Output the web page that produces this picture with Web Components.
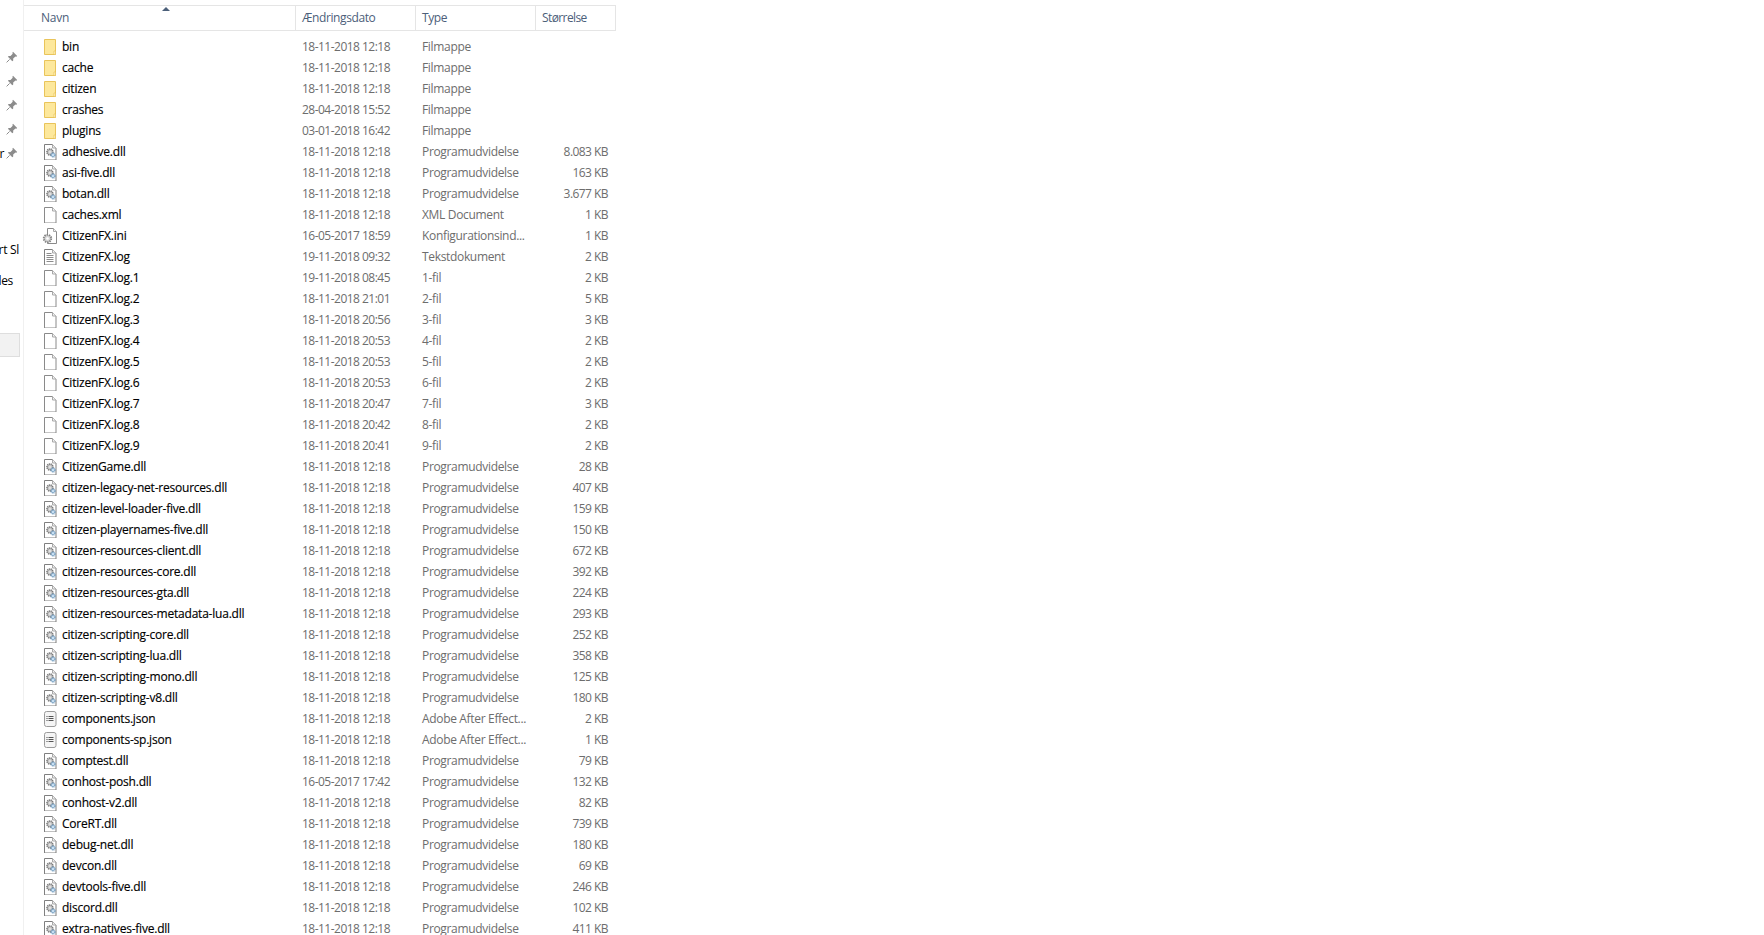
<!DOCTYPE html>
<html lang="da">
<head>
<meta charset="utf-8">
<title>Stifinder</title>
<style>
  html, body { margin: 0; height: 100%; background: #fff; overflow: hidden; }
  body { font: 12px "Open Sans", "Noto Sans", sans-serif; }
</style>
</head>
<body>
<explorer-view></explorer-view>

<script>
const PAGE = `<path d="M2.5.5h8l3.5 3.5v12H2.5z" fill="#fff" stroke="#7f7f7f"/><path d="M10.5.5V4H14" fill="#eee" stroke="#a8a8a8"/>`;
const SYMBOLS = {
  folder: `<path d="M2.5.5h11v15h-11z" fill="#fde89c" stroke="#e9c45a"/><path d="M12 12h1.5v3.5H12z" fill="#fff6d2" stroke="#e9c45a" stroke-width=".7"/>`,
  blank: `<path d="M2.5.5h8l3.5 3.5v12H2.5z" fill="#fff" stroke="#8a8a8a"/><path d="M10.5.5V4H14" fill="#f2f2f2" stroke="#a8a8a8"/>`,
  dll: `${PAGE}
        <circle cx="8" cy="8" r="3" fill="#c8c8c8" stroke="#7a7a7a" stroke-width="1.6" stroke-dasharray="1.2 .6"/><circle cx="8" cy="8" r=".8" fill="#fff"/>
        <circle cx="11" cy="11" r="2" fill="#b9d6ee" stroke="#6f97b8" stroke-width="1.3" stroke-dasharray="1 .5"/><circle cx="11" cy="11" r=".5" fill="#fff"/>`,
  ini: `<path d="M5.5.5h6l3 3v12H5.5z" fill="#fff" stroke="#8a8a8a"/><path d="M11.5.5v3h3" fill="#f2f2f2" stroke="#a8a8a8"/>
        <circle cx="5.5" cy="10.5" r="3.7" fill="#d4d4d4" stroke="#858585" stroke-width="2" stroke-dasharray="1.4 .9"/><circle cx="5.5" cy="10.5" r="1.3" fill="#fff"/>`,
  log: `${PAGE}<path d="M4.5 4.5h5M4.5 6.5h7M4.5 8.5h7M4.5 10.5h7M4.5 12.5h7" stroke="#8c8c8c"/>`,
  json: `<rect x="2.5" y=".5" width="11.5" height="15" rx="2" fill="#f5f5f5" stroke="#9a9a9a"/>
        <path d="M4.5 5.5h1M4.5 7.5h1M4.5 9.5h1" stroke="#444"/><path d="M6.5 5.5h5M6.5 7.5h5M6.5 9.5h5" stroke="#555"/>`
};

class FileIcon extends HTMLElement {
  connectedCallback() {
    this.attachShadow({ mode: "open" });
    this.shadowRoot.innerHTML = `
      <style>
        :host { display: block; width: 16px; height: 16px; flex: none; }
        svg { display: block; }
      </style>
      <svg width="16" height="16" viewBox="0 0 16 16" fill="none">${SYMBOLS[this.getAttribute("kind")]}</svg>
    `;
  }
}

class FileRow extends HTMLElement {
  connectedCallback() {
    this.attachShadow({ mode: "open" });
    this.shadowRoot.innerHTML = `
      <style>
        :host {
          display: grid;
          grid-template-columns: 272px 120px 120px 80px;
          height: 21px;
          align-items: center;
          line-height: 21px;
          white-space: nowrap;
        }
        .name { display: flex; align-items: center; gap: 4px; padding-left: 18px; color: #000; letter-spacing: -.22px; -webkit-text-stroke: .15px #000; }
        .date, .type, .size { color: #6d6d6d; }
        .date, .type { padding-left: 6px; }
        .date { letter-spacing: -.52px; }
        .type { letter-spacing: -.33px; }
        .size { text-align: right; padding-right: 8px; letter-spacing: -.55px; }
      </style>
      <div class="name"><file-icon kind="${this.getAttribute("kind")}"></file-icon><span>${this.getAttribute("name")}</span></div>
      <div class="date">${this.getAttribute("date")}</div>
      <div class="type">${this.getAttribute("type")}</div>
      <div class="size">${this.getAttribute("size") || ""}</div>
    `;
  }
}

class FileHeader extends HTMLElement {
  connectedCallback() {
    this.attachShadow({ mode: "open" });
    this.shadowRoot.innerHTML = `
      <style>
        :host {
          display: grid;
          grid-template-columns: 272px 120px 120px 80px;
          height: 24px;
          position: relative;
          border-top: 1px solid #e5e5e5;
          border-bottom: 1px solid #e5e5e5;
          line-height: 24px;
          color: #4c607a;
          letter-spacing: -.4px;
        }
        div { padding-left: 6px; border-right: 1px solid #e5e5e5; white-space: nowrap; }
        div:first-of-type { padding-left: 17px; letter-spacing: -.2px; }
        div:nth-of-type(4) { letter-spacing: -.6px; }
        .sort {
          position: absolute; left: 138px; top: 1px; width: 0; height: 0; padding: 0;
          border: 4px solid transparent; border-top: 0; border-bottom: 4px solid #4c607a;
        }
      </style>
      <div>Navn</div>
      <div>Ændringsdato</div>
      <div>Type</div>
      <div>Størrelse</div>
      <span class="sort"></span>
    `;
  }
}

const D = "18-11-2018 12:18", P = "Programudvidelse", F = "Filmappe";
const FILES = [
  ["bin", D, F, "", "folder"],
  ["cache", D, F, "", "folder"],
  ["citizen", D, F, "", "folder"],
  ["crashes", "28-04-2018 15:52", F, "", "folder"],
  ["plugins", "03-01-2018 16:42", F, "", "folder"],
  ["adhesive.dll", D, P, "8.083 KB", "dll"],
  ["asi-five.dll", D, P, "163 KB", "dll"],
  ["botan.dll", D, P, "3.677 KB", "dll"],
  ["caches.xml", D, "XML Document", "1 KB", "blank"],
  ["CitizenFX.ini", "16-05-2017 18:59", "Konfigurationsind...", "1 KB", "ini"],
  ["CitizenFX.log", "19-11-2018 09:32", "Tekstdokument", "2 KB", "log"],
  ["CitizenFX.log.1", "19-11-2018 08:45", "1-fil", "2 KB", "blank"],
  ["CitizenFX.log.2", "18-11-2018 21:01", "2-fil", "5 KB", "blank"],
  ["CitizenFX.log.3", "18-11-2018 20:56", "3-fil", "3 KB", "blank"],
  ["CitizenFX.log.4", "18-11-2018 20:53", "4-fil", "2 KB", "blank"],
  ["CitizenFX.log.5", "18-11-2018 20:53", "5-fil", "2 KB", "blank"],
  ["CitizenFX.log.6", "18-11-2018 20:53", "6-fil", "2 KB", "blank"],
  ["CitizenFX.log.7", "18-11-2018 20:47", "7-fil", "3 KB", "blank"],
  ["CitizenFX.log.8", "18-11-2018 20:42", "8-fil", "2 KB", "blank"],
  ["CitizenFX.log.9", "18-11-2018 20:41", "9-fil", "2 KB", "blank"],
  ["CitizenGame.dll", D, P, "28 KB", "dll"],
  ["citizen-legacy-net-resources.dll", D, P, "407 KB", "dll"],
  ["citizen-level-loader-five.dll", D, P, "159 KB", "dll"],
  ["citizen-playernames-five.dll", D, P, "150 KB", "dll"],
  ["citizen-resources-client.dll", D, P, "672 KB", "dll"],
  ["citizen-resources-core.dll", D, P, "392 KB", "dll"],
  ["citizen-resources-gta.dll", D, P, "224 KB", "dll"],
  ["citizen-resources-metadata-lua.dll", D, P, "293 KB", "dll"],
  ["citizen-scripting-core.dll", D, P, "252 KB", "dll"],
  ["citizen-scripting-lua.dll", D, P, "358 KB", "dll"],
  ["citizen-scripting-mono.dll", D, P, "125 KB", "dll"],
  ["citizen-scripting-v8.dll", D, P, "180 KB", "dll"],
  ["components.json", D, "Adobe After Effect...", "2 KB", "json"],
  ["components-sp.json", D, "Adobe After Effect...", "1 KB", "json"],
  ["comptest.dll", D, P, "79 KB", "dll"],
  ["conhost-posh.dll", "16-05-2017 17:42", P, "132 KB", "dll"],
  ["conhost-v2.dll", D, P, "82 KB", "dll"],
  ["CoreRT.dll", D, P, "739 KB", "dll"],
  ["debug-net.dll", D, P, "180 KB", "dll"],
  ["devcon.dll", D, P, "69 KB", "dll"],
  ["devtools-five.dll", D, P, "246 KB", "dll"],
  ["discord.dll", D, P, "102 KB", "dll"],
  ["extra-natives-five.dll", D, P, "411 KB", "dll"],
];

class FileList extends HTMLElement {
  connectedCallback() {
    this.attachShadow({ mode: "open" });
    const rows = FILES.map(([name, date, type, size, kind]) =>
      `<file-row name="${name}" date="${date}" type="${type}" size="${size}" kind="${kind}"></file-row>`
    ).join("");
    this.shadowRoot.innerHTML = `
      <style>
        :host { display: block; width: 592px; padding-top: 5px; }
        .rows { padding-top: 5px; }
      </style>
      <file-header></file-header>
      <div class="rows">${rows}</div>
    `;
  }
}

class NavItem extends HTMLElement {
  connectedCallback() {
    this.attachShadow({ mode: "open" });
    const pin = this.hasAttribute("pinned") ? `
      <svg width="12" height="12" viewBox="0 0 12 12">
        <path d="M7 .8 11.2 5 10.3 5.7 9.4 5.4 7.2 7.6 7.2 9.4 6.3 10.2 1.9 5.8 2.7 4.9 4.5 4.9 6.7 2.7 6.4 1.7z" fill="#8c8c8c"/>
        <path d="M3.6 8.4.6 11.4" stroke="#8c8c8c"/>
      </svg>` : "";
    this.shadowRoot.innerHTML = `
      <style>
        :host {
          display: flex; height: 24px; align-items: center; justify-content: flex-end;
          gap: 2px; padding-right: 5px; white-space: nowrap; overflow: hidden; box-sizing: border-box;
          color: #000; letter-spacing: -.3px;
        }
        :host([selected]) { width: 20px; background: #f2f2f2; border: 1px solid #dedede; border-left: 0; padding: 0; }
        svg { flex: none; }
      </style>
      <slot></slot>${pin}
    `;
  }
}

class NavPane extends HTMLElement {
  connectedCallback() {
    this.attachShadow({ mode: "open" });
    this.shadowRoot.innerHTML = `
      <style>
        :host { display: block; width: 24px; flex: none; padding-top: 45px; box-sizing: border-box; border-right: 1px solid #f0f0f0; overflow: hidden; }
        .gap-a { height: 72px; }
        .gap-b { height: 7px; }
        .gap-c { height: 41px; }
      </style>
      <nav-item pinned></nav-item>
      <nav-item pinned></nav-item>
      <nav-item pinned></nav-item>
      <nav-item pinned></nav-item>
      <nav-item pinned>r</nav-item>
      <div class="gap-a"></div>
      <nav-item style="padding-right: 4px">rt Sl</nav-item>
      <div class="gap-b"></div>
      <nav-item style="padding-right: 10px">les</nav-item>
      <div class="gap-c"></div>
      <nav-item selected></nav-item>
    `;
  }
}

class ExplorerView extends HTMLElement {
  connectedCallback() {
    this.attachShadow({ mode: "open" });
    this.shadowRoot.innerHTML = `
      <style>
        :host { display: flex; height: 935px; overflow: hidden; background: #fff; font: 12px "Open Sans", "Noto Sans", sans-serif; }
      </style>
      <nav-pane></nav-pane>
      <file-list></file-list>
    `;
  }
}

customElements.define("file-icon", FileIcon);
customElements.define("file-row", FileRow);
customElements.define("file-header", FileHeader);
customElements.define("file-list", FileList);
customElements.define("nav-item", NavItem);
customElements.define("nav-pane", NavPane);
customElements.define("explorer-view", ExplorerView);
</script>
</body>
</html>
